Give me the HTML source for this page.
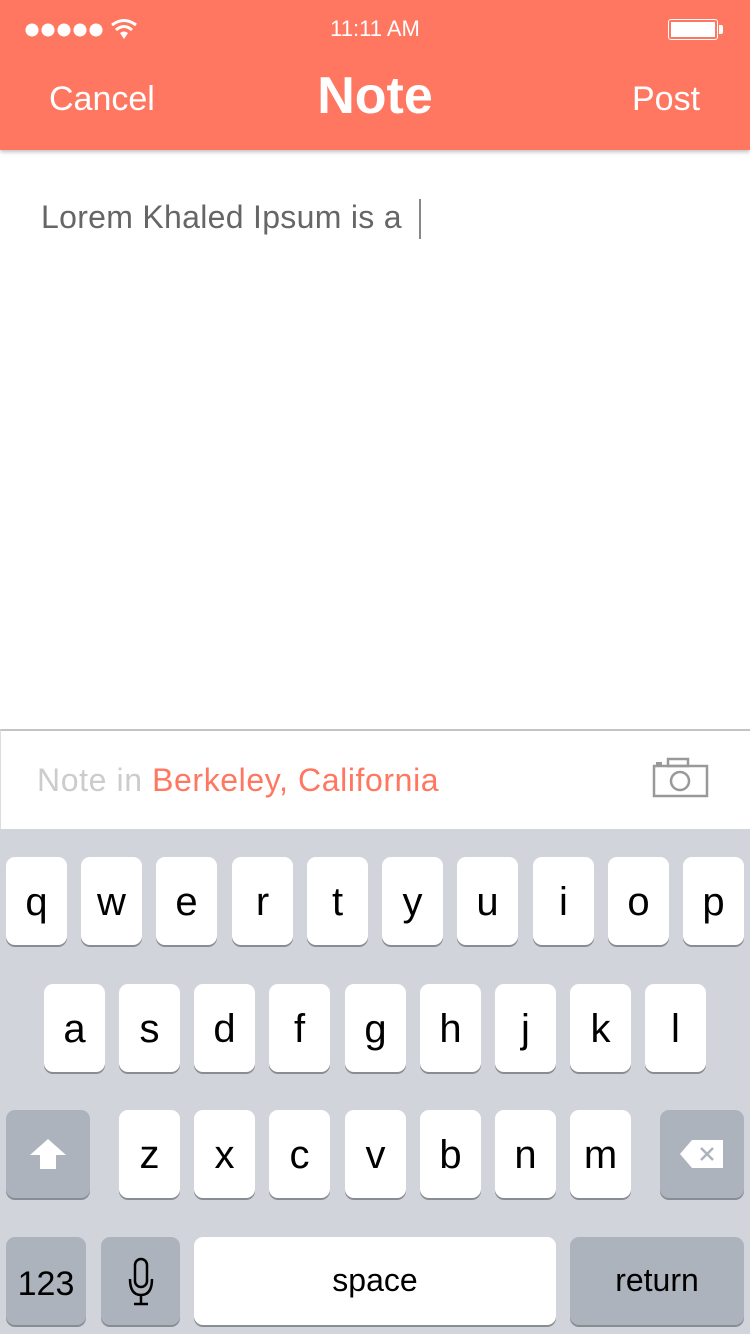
<!DOCTYPE html><html><head><meta charset="utf-8"><style>
body{margin:0;width:750px;height:1334px;position:relative;overflow:hidden;background:#fff;font-family:"Liberation Sans",sans-serif}
.a{position:absolute}
.hdr{left:0;top:0;width:750px;height:150px;background:#FF7760;box-shadow:0 2px 4px rgba(0,0,0,.25)}
.k{position:absolute;background:#fff;border-radius:9px;box-shadow:0 2px 0 #888c93;height:88px;width:61px;text-align:center;line-height:90px;font-size:40px;color:#000}
.s{background:#ADB3BC}
</style></head><body>
<div class="a hdr"></div>
<div class="a" style="left:20px;top:18px;">
<svg width="125" height="26"><g fill="#fff"><circle cx="12" cy="12" r="6.5"/><circle cx="28" cy="12" r="6.5"/><circle cx="44" cy="12" r="6.5"/><circle cx="60" cy="12" r="6.5"/><circle cx="76" cy="12" r="6.5"/></g>
<g fill="none" stroke="#fff" stroke-width="3"><path d="M92 7 Q104 -2 116 7"/><path d="M96 12 Q104 5 112 12"/></g><path d="M100 15 L104 21 L108 15 Q104 12 100 15Z" fill="#fff"/></svg></div>
<div class="a" style="left:0;width:750px;top:16px;text-align:center;color:#fff;font-size:22px">11:11 AM</div>
<div class="a" style="left:668px;top:19px;width:50px;height:21px;border:1.5px solid #fff;border-radius:3px;box-sizing:border-box;padding:2px"><div style="background:#fff;width:100%;height:100%"></div></div>
<div class="a" style="left:719px;top:25px;width:4px;height:9px;background:#fff;border-radius:0 2px 2px 0"></div>
<div class="a" style="left:49px;top:80px;color:#fff;font-size:34px">Cancel</div>
<div class="a" style="left:0;width:750px;top:66px;text-align:center;color:#fff;font-size:52px;font-weight:bold">Note</div>
<div class="a" style="left:632px;top:80px;color:#fff;font-size:34px">Post</div>
<div class="a" style="left:41px;top:199px;color:#666;font-size:32px;letter-spacing:0.3px">Lorem Khaled Ipsum is a</div>
<div class="a" style="left:419px;top:199px;width:2px;height:40px;background:#888"></div>
<div class="a" style="left:0;top:729px;width:750px;height:100px;border-top:2px solid #c4c4c4;border-left:1px solid #ddd;box-sizing:border-box;background:#fff"></div>
<div class="a" style="left:37px;top:762px;font-size:32px;color:#ccc;letter-spacing:0.6px">Note in <span style="color:#FF7760">Berkeley, California</span></div>
<svg class="a" style="left:652px;top:757px" width="58" height="42"><g fill="none" stroke="#999" stroke-width="2.5"><rect x="2" y="9" width="53" height="30"/><rect x="16" y="2" width="20" height="7"/><circle cx="28" cy="24" r="9"/></g><rect x="4" y="5" width="6" height="4" fill="#999"/></svg>
<div class="a" style="left:0;top:829px;width:750px;height:505px;background:#D1D5DB"></div>
<div class="k" style="left:6px;top:857px">q</div><div class="k" style="left:81px;top:857px">w</div><div class="k" style="left:156px;top:857px">e</div><div class="k" style="left:232px;top:857px">r</div><div class="k" style="left:307px;top:857px">t</div><div class="k" style="left:382px;top:857px">y</div><div class="k" style="left:457px;top:857px">u</div><div class="k" style="left:533px;top:857px">i</div><div class="k" style="left:608px;top:857px">o</div><div class="k" style="left:683px;top:857px">p</div>
<div class="k" style="left:44px;top:984px">a</div><div class="k" style="left:119px;top:984px">s</div><div class="k" style="left:194px;top:984px">d</div><div class="k" style="left:269px;top:984px">f</div><div class="k" style="left:345px;top:984px">g</div><div class="k" style="left:420px;top:984px">h</div><div class="k" style="left:495px;top:984px">j</div><div class="k" style="left:570px;top:984px">k</div><div class="k" style="left:645px;top:984px">l</div>
<div class="k s" style="left:6px;top:1110px;width:84px"><svg width="40" height="34" style="margin-top:27px"><path d="M20 2 L38 18 L28 18 L28 32 L12 32 L12 18 L2 18Z" fill="#fff"/></svg></div>
<div class="k" style="left:119px;top:1110px">z</div><div class="k" style="left:194px;top:1110px">x</div><div class="k" style="left:269px;top:1110px">c</div><div class="k" style="left:345px;top:1110px">v</div><div class="k" style="left:420px;top:1110px">b</div><div class="k" style="left:495px;top:1110px">n</div><div class="k" style="left:570px;top:1110px">m</div>
<div class="k s" style="left:660px;top:1110px;width:84px"><svg width="46" height="32" style="margin-top:28px"><path d="M1 16 L13 2 L44 2 L44 30 L13 30Z" fill="#fff"/><path d="M22 10 L34 22 M34 10 L22 22" stroke="#ADB3BC" stroke-width="2.5"/></svg></div>
<div class="k s" style="left:6px;top:1237px;width:80px;font-size:34px;line-height:94px">123</div>
<div class="k s" style="left:101px;top:1237px;width:79px"><svg width="30" height="50" style="margin-top:20px"><g fill="none" stroke="#000" stroke-width="2.5"><rect x="9" y="2" width="12" height="28" rx="6"/><path d="M4 22 Q4 38 15 38 Q26 38 26 22 M15 38 V47 M8 47 H22"/></g></svg></div>
<div class="k" style="left:194px;top:1237px;width:362px;font-size:32px;line-height:86px">space</div>
<div class="k s" style="left:570px;top:1237px;width:174px;font-size:32px;line-height:86px">return</div>
</body></html>
